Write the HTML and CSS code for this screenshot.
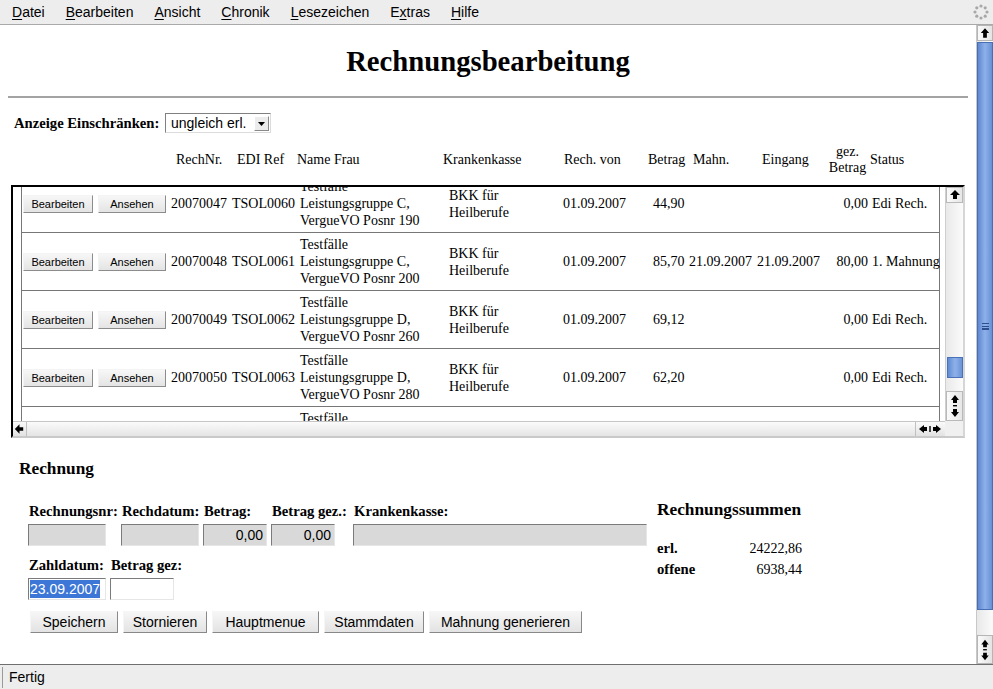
FILE: index.html
```html
<!DOCTYPE html>
<html lang="de">
<head>
<meta charset="utf-8">
<title>Rechnungsbearbeitung</title>
<link rel="stylesheet" href="styles.css">
</head>
<body>
<div class="menubar">
  <span class="mi"><u>D</u>atei</span>
  <span class="mi"><u>B</u>earbeiten</span>
  <span class="mi"><u>A</u>nsicht</span>
  <span class="mi"><u>C</u>hronik</span>
  <span class="mi"><u>L</u>esezeichen</span>
  <span class="mi">E<u>x</u>tras</span>
  <span class="mi"><u>H</u>ilfe</span>
  <span class="throbber">
    <svg width="16" height="16" viewBox="0 0 16 16">
      <g fill="#a8a8a8">
        <circle cx="8" cy="2" r="1.6"/><circle cx="12.2" cy="3.8" r="1.6"/>
        <circle cx="14" cy="8" r="1.6"/><circle cx="12.2" cy="12.2" r="1.6"/>
        <circle cx="8" cy="14" r="1.6"/><circle cx="3.8" cy="12.2" r="1.6"/>
        <circle cx="2" cy="8" r="1.6"/><circle cx="3.8" cy="3.8" r="1.6"/>
      </g>
    </svg>
  </span>
</div>
<div class="viewport">
  <div class="page">
    <h1 class="title">Rechnungsbearbeitung</h1>
    <div class="rule"></div>
    <div class="filter">
      <b class="filter-label">Anzeige Einschränken:</b>
      <div class="select">
        <span class="select-text">ungleich erl.</span>
        <span class="select-btn"><svg width="13" height="13" viewBox="0 0 13 13"><polygon points="3,5 10,5 6.5,9" fill="#000"/></svg></span>
      </div>
    </div>
    <div class="thead">
      <span>RechNr.</span>
      <span>EDI Ref</span>
      <span>Name Frau</span>
      <span>Krankenkasse</span>
      <span>Rech. von</span>
      <span>Betrag</span>
      <span>Mahn.</span>
      <span>Eingang</span>
      <span class="th-gez">gez.<br>Betrag</span>
      <span>Status</span>
    </div>
    <div class="scrollbox">
      <div class="sb-content">
        <table class="rows">
          <colgroup>
            <col class="c-btn"><col class="c-nr"><col class="c-edi"><col class="c-name"><col class="c-kasse">
            <col class="c-von"><col class="c-betrag"><col class="c-mahn"><col class="c-eing"><col class="c-gez"><col class="c-status">
          </colgroup>
          <tr>
            <td class="td-btn"><button class="tbtn tb-edit">Bearbeiten</button> <button class="tbtn tb-view">Ansehen</button></td>
            <td>20070047</td><td>TSOL0060</td>
            <td class="td-name">Testfälle<br>Leistungsgruppe C,<br>VergueVO Posnr 190</td>
            <td class="td-kasse">BKK für<br>Heilberufe</td>
            <td>01.09.2007</td><td>44,90</td><td></td><td></td>
            <td class="td-gez">0,00</td><td>Edi Rech.</td>
          </tr>
          <tr>
            <td class="td-btn"><button class="tbtn tb-edit">Bearbeiten</button> <button class="tbtn tb-view">Ansehen</button></td>
            <td>20070048</td><td>TSOL0061</td>
            <td class="td-name">Testfälle<br>Leistungsgruppe C,<br>VergueVO Posnr 200</td>
            <td class="td-kasse">BKK für<br>Heilberufe</td>
            <td>01.09.2007</td><td>85,70</td><td>21.09.2007</td><td>21.09.2007</td>
            <td class="td-gez">80,00</td><td>1. Mahnung</td>
          </tr>
          <tr>
            <td class="td-btn"><button class="tbtn tb-edit">Bearbeiten</button> <button class="tbtn tb-view">Ansehen</button></td>
            <td>20070049</td><td>TSOL0062</td>
            <td class="td-name">Testfälle<br>Leistungsgruppe D,<br>VergueVO Posnr 260</td>
            <td class="td-kasse">BKK für<br>Heilberufe</td>
            <td>01.09.2007</td><td>69,12</td><td></td><td></td>
            <td class="td-gez">0,00</td><td>Edi Rech.</td>
          </tr>
          <tr>
            <td class="td-btn"><button class="tbtn tb-edit">Bearbeiten</button> <button class="tbtn tb-view">Ansehen</button></td>
            <td>20070050</td><td>TSOL0063</td>
            <td class="td-name">Testfälle<br>Leistungsgruppe D,<br>VergueVO Posnr 280</td>
            <td class="td-kasse">BKK für<br>Heilberufe</td>
            <td>01.09.2007</td><td>62,20</td><td></td><td></td>
            <td class="td-gez">0,00</td><td>Edi Rech.</td>
          </tr>
          <tr>
            <td class="td-btn"><button class="tbtn tb-edit">Bearbeiten</button> <button class="tbtn tb-view">Ansehen</button></td>
            <td>20070051</td><td>TSOL0064</td>
            <td class="td-name">Testfälle<br>Leistungsgruppe D,<br>VergueVO Posnr 290</td>
            <td class="td-kasse">BKK für<br>Heilberufe</td>
            <td>01.09.2007</td><td>58,30</td><td></td><td></td>
            <td class="td-gez">0,00</td><td>Edi Rech.</td>
          </tr>
        </table>
      </div>
      <div class="vscroll">
        <div class="sbtn sbtn-up"><svg width="14" height="14" viewBox="0 0 14 14"><polygon points="7,2 12,7 9,7 9,11 5,11 5,7 2,7" fill="#000"/></svg></div>
        <div class="vtrack"><div class="vthumb"></div></div>
        <div class="sbtn sbtn-dbl"><svg width="14" height="28" viewBox="0 0 14 28"><polygon points="7,3 11,8 9,8 9,11 5,11 5,8 3,8" fill="#000"/><rect x="5" y="13" width="4" height="1.4" fill="#000"/><polygon points="7,25 11,20 9,20 9,17 5,17 5,20 3,20" fill="#000"/></svg></div>
      </div>
      <div class="hscroll">
        <div class="hbtn"><svg width="14" height="14" viewBox="0 0 14 14"><polygon points="2,7 7,2 7,5 11,5 11,9 7,9 7,12" fill="#000"/></svg></div>
        <div class="htrack"></div>
        <div class="hbtn hbtn-dbl"><svg width="26" height="14" viewBox="0 0 26 14"><polygon points="2,7 7,3 7,5 10,5 10,9 7,9 7,11" fill="#000"/><rect x="12.3" y="4" width="1.4" height="6" fill="#000"/><polygon points="24,7 19,3 19,5 16,5 16,9 19,9 19,11" fill="#000"/></svg></div>
      </div>
      <div class="corner"></div>
    </div>
    <div class="bottom">
      <div class="form">
        <h3 class="h-rechnung">Rechnung</h3>
        <div class="fgrid fgrid1">
          <b class="flabel">Rechnungsnr:</b>
          <b class="flabel">Rechdatum:</b>
          <b class="flabel">Betrag:</b>
          <b class="flabel">Betrag gez.:</b>
          <b class="flabel">Krankenkasse:</b>
          <div class="inp ro w78"></div>
          <div class="inp ro w78"></div>
          <div class="inp ro w64 num">0,00</div>
          <div class="inp ro w64 num">0,00</div>
          <div class="inp ro w294"></div>
        </div>
        <div class="fgrid fgrid2">
          <b class="flabel">Zahldatum:</b>
          <b class="flabel">Betrag gez:</b>
          <div class="inp w78"><span class="sel">23.09.2007</span></div>
          <div class="inp w64"></div>
        </div>
        <div class="actions">
          <button class="abtn ab-1">Speichern</button>
          <button class="abtn ab-2">Stornieren</button>
          <button class="abtn ab-3">Hauptmenue</button>
          <button class="abtn ab-4">Stammdaten</button>
          <button class="abtn ab-5">Mahnung generieren</button>
        </div>
      </div>
      <div class="summary">
        <h3 class="h-summen">Rechnungssummen</h3>
        <table class="sums">
          <tr><th>erl.</th><td>24222,86</td></tr>
          <tr><th>offene</th><td>6938,44</td></tr>
        </table>
      </div>
    </div>
  </div>
  <div class="pscroll">
    <div class="psbtn"><svg width="15" height="15" viewBox="0 0 15 15"><polygon points="7.5,2 12,7 9.5,7 9.5,12 5.5,12 5.5,7 3,7" fill="#000"/></svg></div>
    <div class="ptrack"><div class="pthumb"><span class="grip"></span></div></div>
    <div class="psbtn psbtn-dbl"><svg width="15" height="28" viewBox="0 0 15 28"><polygon points="7.5,3 11.5,8 9.5,8 9.5,11 5.5,11 5.5,8 3.5,8" fill="#000"/><rect x="5.5" y="13" width="4" height="1.4" fill="#000"/><polygon points="7.5,25 11.5,20 9.5,20 9.5,17 5.5,17 5.5,20 3.5,20" fill="#000"/></svg></div>
  </div>
</div>
<div class="statusbar"><span class="status-text">Fertig</span></div>
</body>
</html>
```

FILE: styles.css
```css
* { box-sizing: border-box; }
html, body { margin: 0; padding: 0; }
body {
  width: 993px; height: 689px; overflow: hidden; background: #fff; color: #000;
  font-family: "Liberation Serif", "Times New Roman", serif; font-size: 14px;
}

/* menu bar */
.menubar {
  height: 25px; background: #ededed; border-bottom: 1px solid #a9a9a9;
  display: flex; align-items: center; padding-left: 12px;
  font-family: "Liberation Sans", Arial, sans-serif; font-size: 14px;
}
.mi { margin-right: 21px; line-height: 16px; }
.mi u { text-underline-offset: 2px; }
.throbber { margin-left: auto; margin-right: 4px; width: 16px; height: 16px; display: flex; }

/* viewport */
.viewport { display: flex; height: 639px; }
.page { width: 976px; height: 639px; overflow: hidden; }

.title { margin: 20px 0 0; text-align: center; font-size: 28.7px; line-height: 32px; font-weight: bold; }
.rule { margin: 19px 8px 0; height: 2px; background: #a3a3a3; }

.filter { margin-top: 15px; height: 20px; display: flex; align-items: center; padding-left: 14px; }
.filter-label { width: 151px; font-size: 14.667px; }
.select {
  width: 106px; height: 20px; background: #fff;
  border: 1px solid; border-color: #808080 #dcdcdc #dcdcdc #808080;
  display: flex; align-items: center; padding-left: 5px;
  font-family: "Liberation Sans", Arial, sans-serif; font-size: 14px;
}
.select-text { flex: 1; }
.select-btn {
  width: 15px; height: 15px; margin-right: 1px; background: #ececec;
  border: 1px solid; border-color: #fff #8a8a8a #8a8a8a #fff;
  display: flex; align-items: center; justify-content: center;
}

.thead {
  margin-top: 11px; height: 32px; padding-left: 176px;
  display: grid; grid-template-columns: 61px 60px 146px 121px 84px 45px 69px 63px 45px auto;
  align-items: center; line-height: 16px; white-space: nowrap;
}
.th-gez { text-align: center; }

/* scroll box */
.scrollbox {
  margin: 9px 0 0 11px; width: 954px; height: 253px;
  border: 2px solid; border-color: #000 #d6d6d6 #c9c9c9 #000;
  display: grid; grid-template-columns: 932px 18px; grid-template-rows: 234px 15px;
}
.sb-content { overflow: hidden; }
.rows {
  margin: -12px 0 0 8px; width: 919px; table-layout: fixed;
  border-collapse: separate; border-spacing: 0;
  border-left: 1px solid #777; border-right: 1px solid #777;
}
.c-btn { width: 147px; } .c-nr { width: 61px; } .c-edi { width: 68px; } .c-name { width: 149px; }
.c-kasse { width: 114px; } .c-von { width: 90px; } .c-betrag { width: 36px; } .c-mahn { width: 68px; }
.c-eing { width: 68px; } .c-gez { width: 47px; } .c-status { width: 69px; }
.rows td {
  height: 58px; padding: 0 2px; border-bottom: 1px solid #777;
  vertical-align: middle; white-space: nowrap; line-height: 17px;
}
.rows td.td-btn { padding: 0 0 0 1px; font-size: 0; }
.rows td.td-gez { text-align: right; }
.tbtn {
  height: 18px; padding: 0; margin: 0 5px 0 0;
  font-family: "Liberation Sans", Arial, sans-serif; font-size: 11px; color: #000;
  background: linear-gradient(#f7f7f7, #e4e4e4);
  border: 1px solid; border-color: #f4f4f4 #8c8c8c #8c8c8c #f4f4f4;
  vertical-align: middle;
}
.tb-edit { width: 70px; }
.tb-view { width: 68px; }

.vscroll { display: flex; flex-direction: column; background: #f3f3f3; border-left: 1px solid #cfcfcf; }
.sbtn {
  height: 16px; display: flex; align-items: center; justify-content: center;
  background: linear-gradient(90deg, #fafafa, #e6e6e6); border: 1px solid #b9b9b9;
}
.sbtn-dbl { height: 30px; }
.vtrack { flex: 1; position: relative; background: linear-gradient(90deg, #e9e9e9, #fbfbfb); }
.vthumb {
  position: absolute; left: 1px; right: 0; top: 154px; height: 21px;
  background: linear-gradient(90deg, #5f8bd3, #8fb1e8 50%, #6a93d6); border: 1px solid #4a72b8;
}
.hscroll { display: flex; background: linear-gradient(#fbfbfb, #e4e4e4); border-top: 1px solid #c5c5c5; }
.hbtn { width: 14px; display: flex; align-items: center; justify-content: center; background: linear-gradient(#fafafa, #e2e2e2); border-right: 1px solid #c0c0c0; }
.hbtn-dbl { width: 28px; border-right: 0; border-left: 1px solid #c0c0c0; margin-right: 2px; }
.htrack { flex: 1; }
.corner { background: #f0f0f0; }

/* bottom form */
.bottom { display: flex; }
.form { width: 657px; flex: none; padding-left: 19px; }
.h-rechnung, .h-summen { margin: 0; font-size: 17.3px; line-height: 20px; font-weight: bold; }
.h-rechnung { margin-top: 21px; }
.fgrid { display: grid; row-gap: 4px; padding-left: 9px; }
.fgrid1 { margin-top: 24px; grid-template-columns: 93px 82px 68px 82px 295px; }
.fgrid2 { margin-top: 11px; grid-template-columns: 82px 64px; }
.flabel { font-size: 14.667px; line-height: 17px; padding-left: 1px; white-space: nowrap; }
.inp {
  height: 22px; background: #fff;
  border: 1px solid; border-color: #7b7b7b #e6e6e6 #e6e6e6 #7b7b7b;
  font-family: "Liberation Sans", Arial, sans-serif; font-size: 14px; line-height: 20px;
  padding: 0 1px; white-space: nowrap; overflow: hidden;
}
.inp.ro { background: #d9d9d9; }
.inp.num { text-align: right; padding-right: 3px; }
.w78 { width: 78px; } .w64 { width: 64px; } .w294 { width: 294px; }
.sel { background: #3c76d6; color: #fff; padding: 1px 0; }

.actions { margin-top: 11px; padding-left: 11px; display: flex; gap: 5px; }
.abtn {
  height: 22px; padding: 0; font-family: "Liberation Sans", Arial, sans-serif; font-size: 14px; color: #000;
  background: linear-gradient(#f6f6f6, #e3e3e3);
  border: 1px solid; border-color: #f6f6f6 #888 #888 #f6f6f6;
}
.ab-1 { width: 88px; } .ab-2 { width: 84px; } .ab-3 { width: 107px; } .ab-4 { width: 100px; } .ab-5 { width: 153px; }

.summary { padding-top: 62px; }
.sums { margin-top: 18px; width: 145px; border-collapse: collapse; }
.sums th { text-align: left; font-size: 14.667px; line-height: 21px; padding: 0; }
.sums td { text-align: right; line-height: 21px; padding: 0; }

/* page scrollbar */
.pscroll { width: 17px; display: flex; flex-direction: column; background: #f2f2f2; border-left: 1px solid #c8c8c8; }
.psbtn { height: 16px; display: flex; align-items: center; justify-content: center; background: linear-gradient(90deg, #fafafa, #e4e4e4); border: 1px solid #b5b5b5; }
.psbtn-dbl { height: 29px; }
.ptrack { flex: 1; position: relative; background: linear-gradient(90deg, #e8e8e8, #fbfbfb); }
.pthumb {
  position: absolute; left: 0; right: 0; top: 1px; height: 568px;
  background: linear-gradient(90deg, #5d88d2, #8fb1e8 50%, #6690d6); border: 1px solid #476fb6;
  display: flex; align-items: center; justify-content: center;
}
.grip { width: 7px; height: 7px; border-top: 1px solid #2e4f8e; border-bottom: 1px solid #2e4f8e;
  background: linear-gradient(#2e4f8e, #2e4f8e) 0 2px / 7px 1px no-repeat, linear-gradient(#2e4f8e, #2e4f8e) 0 4px / 7px 1px no-repeat; }

/* status bar */
.statusbar {
  height: 25px; border-top: 1px solid #6f6f6f; background: #ededed;
  display: flex; align-items: center; padding-left: 2px;
  font-family: "Liberation Sans", Arial, sans-serif; font-size: 14px;
}
.status-text { border-left: 1px solid #9a9a9a; padding-left: 6px; line-height: 20px; height: 21px; }
```
